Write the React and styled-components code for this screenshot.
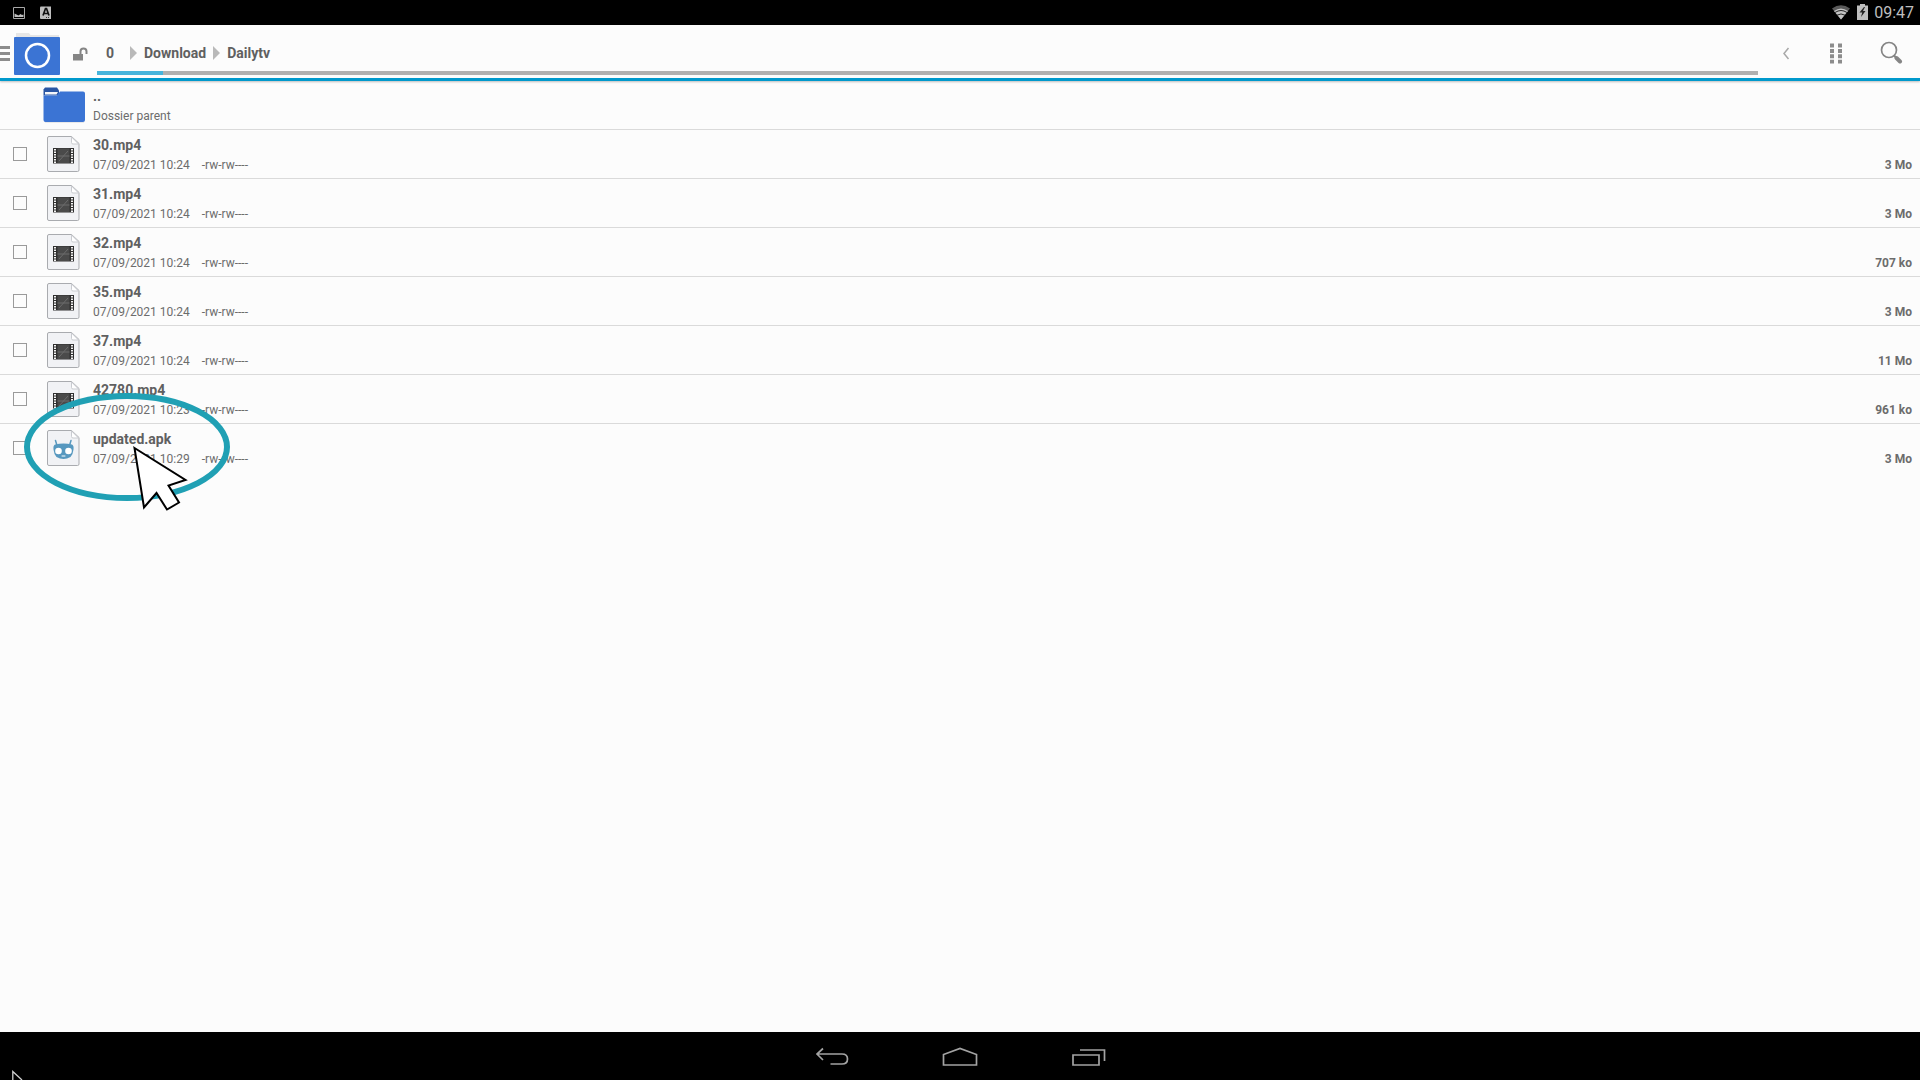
import React from "react";
import styled, { createGlobalStyle } from "styled-components";

const GlobalStyle = createGlobalStyle`
  * { box-sizing: border-box; }
  body {
    margin: 0;
    background: #fcfcfc;
    color: #606060;
    font-family: Roboto, "Liberation Sans", sans-serif;
  }
  ul { list-style: none; margin: 0; padding: 0; }
  svg { display: block; flex: none; }
`;

const Screen = styled.div`
  position: relative;
  display: flex;
  flex-direction: column;
  min-height: 100vh;
  overflow: hidden;
`;

const StatusBar = styled.div`
  display: flex;
  align-items: center;
  justify-content: space-between;
  height: 25px;
  padding: 0 6px 0 12px;
  background: #000;
  color: #bebebe;
`;

const StatusGroup = styled.div`
  display: flex;
  align-items: center;
  gap: ${(p) => p.$gap};
`;

const Clock = styled.time`
  font-size: 16px;
  line-height: 24px;
`;

const Toolbar = styled.header`
  display: flex;
  height: 56px;
  border-bottom: 3px solid #0099cc;
  box-shadow: 0 1px 2px rgba(0, 0, 0, 0.25);
`;

const IconButton = styled.button`
  display: flex;
  align-items: center;
  justify-content: center;
  width: ${(p) => p.$width};
  padding: 0;
  border: 0;
  background: none;
  cursor: pointer;
`;

const MenuButton = styled(IconButton)`
  justify-content: flex-start;
`;

const SearchButton = styled(IconButton)`
  padding-left: 4px;
`;

const PathArea = styled.div`
  display: flex;
  flex: 1;
  flex-direction: column;
  min-width: 0;
`;

const Breadcrumbs = styled.nav`
  display: flex;
  flex: 1;
  align-items: center;
  gap: 7px;
  padding: 10px 0 0 9px;
`;

const Crumb = styled.a`
  min-width: 17px;
  color: #606060;
  font-size: 14px;
  font-weight: 700;
  line-height: 20px;
  text-decoration: none;
`;

const Progress = styled.div`
  height: 4px;
  margin-bottom: 3px;
  background: #b0b0b0;
`;

const ProgressFill = styled.div`
  width: 4%;
  height: 4px;
  background: #46b4dc;
`;

const Actions = styled.div`
  display: flex;
`;

const FileList = styled.ul`
  flex: 1;
`;

const Row = styled.li`
  display: grid;
  grid-template-columns: 42px 44px 1fr auto;
  align-items: center;
  height: 49px;
  padding-right: 8px;
  border-bottom: 1px solid ${(p) => (p.$last ? "transparent" : "#dadada")};
`;

const Checkbox = styled.input`
  appearance: none;
  width: 14px;
  height: 14px;
  margin: 0 0 0 13px;
  border: 1px solid #9a9a9a;
  background: #fcfcfc;
`;

const Info = styled.label`
  display: flex;
  flex-direction: column;
  padding: 2px 0 0 7px;
`;

const Title = styled.span`
  font-size: 14px;
  font-weight: 700;
  line-height: 20px;
`;

const Details = styled.span`
  display: flex;
  gap: 12px;
  color: #6c6c6c;
  font-size: 12px;
  line-height: 20px;
`;

const Size = styled.span`
  align-self: end;
  padding-bottom: 3px;
  color: #6c6c6c;
  font-size: 12px;
  font-weight: 700;
  line-height: 20px;
`;

const SystemNav = styled.nav`
  display: flex;
  justify-content: center;
  height: 48px;
  padding-top: 2px;
  background: #000;
`;

const Highlight = styled.svg`
  position: absolute;
  top: 392px;
  left: 22px;
  pointer-events: none;
`;

const CornerPointer = styled.svg`
  position: absolute;
  bottom: 0;
  left: 12px;
  pointer-events: none;
`;

const files = [
  { name: "30.mp4", date: "07/09/2021 10:24", size: "3 Mo" },
  { name: "31.mp4", date: "07/09/2021 10:24", size: "3 Mo" },
  { name: "32.mp4", date: "07/09/2021 10:24", size: "707 ko" },
  { name: "35.mp4", date: "07/09/2021 10:24", size: "3 Mo" },
  { name: "37.mp4", date: "07/09/2021 10:24", size: "11 Mo" },
  { name: "42780.mp4", date: "07/09/2021 10:23", size: "961 ko" },
  { name: "updated.apk", date: "07/09/2021 10:29", size: "3 Mo" },
];

function FolderIcon() {
  return (
    <svg width="44" height="38" viewBox="0 0 44 38" aria-hidden="true">
      <path d="M3 1.500h12l2 3v5H1.500v-6z" fill="#2a56a4" />
      <path d="M3 6h13l-1.500 2.500H3z" fill="#f4f6fa" />
      <path d="M1.500 9.500H15l3-4h23a2 2 0 0 1 2 2V34a2 2 0 0 1-2 2H3.500a2 2 0 0 1-2-2z" fill="#3b74d4" />
      <path d="M3 36.500h39" stroke="#e9e9e9" />
    </svg>
  );
}

function PageShape({ children }) {
  return (
    <svg width="44" height="38" viewBox="0 0 44 38" aria-hidden="true">
      <path d="M7 1.500h22.500l7.500 7V35a1.500 1.500 0 0 1-1.500 1.500H7A1.500 1.500 0 0 1 5.500 35V3A1.500 1.500 0 0 1 7 1.500z" fill="#f1f2f5" stroke="#a9abaf" />
      <path d="M29.500 2v5.500a1.500 1.500 0 0 0 1.500 1.500h5.500z" fill="#fff" stroke="#c9cbd0" />
      {children}
    </svg>
  );
}

function VideoIcon() {
  return (
    <PageShape>
      <path d="M11 13h21v15.500H11z" fill="#303030" />
      <path d="M15.500 13.500h12v14.500h-12z" fill="#4a4a4a" />
      <path d="M15.500 21h12M17 26l9-10" stroke="#6c6c6c" />
      <path d="M13 14v14M30 14v14" stroke="#f3f3f3" strokeWidth="2" strokeDasharray="1.500 1" />
    </PageShape>
  );
}

function ApkIcon() {
  return (
    <PageShape>
      <path d="M13.500 11.500l1.500 5M29 11.500l-1.500 5" stroke="#5798bf" strokeWidth="1.500" strokeLinecap="round" />
      <path d="M13 15.500q8.500-2 17 0 2 1 1.500 5-.5 5-3 7.500-7 4-14 0-2.500-2.500-3-7.500-.5-4 1.500-5z" fill="#5798bf" />
      <circle cx="16.500" cy="22" r="3.300" fill="#fff" />
      <circle cx="26.500" cy="22" r="3.300" fill="#fff" />
      <path d="M20 27h3" stroke="#fff" strokeLinecap="round" />
    </PageShape>
  );
}

function CrumbArrow() {
  return (
    <svg width="7" height="14" viewBox="0 0 7 14" aria-hidden="true">
      <path d="M0 0l7 7-7 7z" fill="#b9b9b9" />
    </svg>
  );
}

function FileRow({ file, last }) {
  return (
    <Row $last={last}>
      <Checkbox type="checkbox" id={file.name} />
      {file.name.endsWith(".apk") ? <ApkIcon /> : <VideoIcon />}
      <Info htmlFor={file.name}>
        <Title>{file.name}</Title>
        <Details>
          <span>{file.date}</span>
          <span>-rw-rw----</span>
        </Details>
      </Info>
      <Size>{file.size}</Size>
    </Row>
  );
}

export default function App() {
  return (
    <Screen>
      <GlobalStyle />
      <StatusBar>
        <StatusGroup $gap="14px">
          <svg width="14" height="14" viewBox="0 0 14 14" aria-hidden="true">
            <path d="M1.500 1.500h11v11h-11z" fill="none" stroke="#a8a8a8" />
            <path d="M2.500 11V7.500l2 1 2 1 2-1.500 1.500 1 1.500-.5V11z" fill="#bdbdbd" />
          </svg>
          <svg width="12" height="14" viewBox="0 0 12 14" aria-hidden="true">
            <path d="M1 .5h10v12.500H1q-1 0-1-1V1.500q0-1 1-1z" fill="#bebebe" />
            <path d="M3 9.500l2.500-7h1l2.500 7M4 7.500h4" fill="none" stroke="#111" strokeWidth="1.700" />
            <path d="M6 11.500h4" stroke="#333" strokeDasharray="1 1" />
          </svg>
        </StatusGroup>
        <StatusGroup $gap="6px">
          <svg width="20" height="16" viewBox="0 0 20 16" aria-hidden="true">
            <path d="M1 3.500q9-6.500 18 0l-9 11z" fill="#5a5a5a" />
            <path d="M3 6q7-5 14 0l-7 8.500z" fill="#c4c4c4" />
            <path d="M4 7.500q6-4 12 0M6 10.200q4-2.500 8 0" fill="none" stroke="#222" />
          </svg>
          <svg width="11" height="18" viewBox="0 0 11 18" aria-hidden="true">
            <path d="M3 0h5v1.500h3V16H0V1.500h3z" fill="#bebebe" />
            <path d="M7 3L2.500 8.500h2.700L4 13 8.500 7H6l2-4z" fill="#222" />
          </svg>
          <Clock>09:47</Clock>
        </StatusGroup>
      </StatusBar>

      <Toolbar>
        <MenuButton type="button" $width="64px" aria-label="Menu">
          <svg width="61" height="53" viewBox="0 0 61 53" aria-hidden="true">
            <path d="M0 22.500h10M0 28.500h10M0 34.500h10" stroke="#8c8c8c" strokeWidth="3" />
            <path d="M16 12V8h13l1.500 2H59v2z" fill="#e6e6e6" />
            <rect x="14" y="12" width="46" height="38" rx="1" fill="#3b74d4" />
            <circle cx="37.500" cy="30.500" r="11.500" fill="none" stroke="#fff" strokeWidth="2.500" />
          </svg>
        </MenuButton>
        <IconButton type="button" $width="33px" aria-label="Verrou">
          <svg width="15" height="53" viewBox="0 0 15 53" aria-hidden="true">
            <path d="M0 29h10v6.500H0z" fill="#858585" />
            <path d="M7.500 29v-2.500a3 3 0 0 1 6 0V29" fill="none" stroke="#858585" strokeWidth="2" />
          </svg>
        </IconButton>
        <PathArea>
          <Breadcrumbs>
            <Crumb href="#0">0</Crumb>
            <CrumbArrow />
            <Crumb href="#download">Download</Crumb>
            <CrumbArrow />
            <Crumb href="#dailytv">Dailytv</Crumb>
          </Breadcrumbs>
          <Progress>
            <ProgressFill />
          </Progress>
        </PathArea>
        <Actions>
          <IconButton type="button" $width="56px" aria-label="Retour">
            <svg width="8" height="16" viewBox="0 0 8 16" fill="none" aria-hidden="true">
              <path d="M6.500 4L2 9.500 6.500 15" stroke="#a8a8a8" strokeWidth="1.500" />
            </svg>
          </IconButton>
          <IconButton type="button" $width="44px" aria-label="Affichage">
            <svg width="12" height="24" viewBox="0 0 12 24" aria-hidden="true">
              <path d="M2 3.500v20M10 3.500v20" stroke="#8c8c8c" strokeWidth="4" strokeDasharray="4 1.400" />
            </svg>
          </IconButton>
          <SearchButton type="button" $width="62px" aria-label="Rechercher">
            <svg width="24" height="24" viewBox="0 0 24 24" fill="none" aria-hidden="true">
              <circle cx="10" cy="10" r="7.500" stroke="#858585" strokeWidth="1.700" />
              <path d="M15 15.500l2 2" stroke="#858585" strokeWidth="2" />
              <path d="M17.500 18l3.500 3.500" stroke="#858585" strokeWidth="4" strokeLinecap="round" />
            </svg>
          </SearchButton>
        </Actions>
      </Toolbar>

      <FileList>
        <Row>
          <span />
          <FolderIcon />
          <Info as="div">
            <Title>..</Title>
            <Details>Dossier parent</Details>
          </Info>
        </Row>
        {files.map((file, i) => (
          <FileRow key={file.name} file={file} last={i === files.length - 1} />
        ))}
      </FileList>

      <SystemNav>
        <IconButton type="button" $width="128px" aria-label="Précédent">
          <svg width="34" height="20" viewBox="0 0 34 20" fill="none" stroke="#a3a3a3" strokeWidth="1.700" aria-hidden="true">
            <path d="M8 1.500L2 7l6 6M2.500 7H27q5.500 0 5.500 5t-5.500 5H15.500" />
          </svg>
        </IconButton>
        <IconButton type="button" $width="128px" aria-label="Accueil">
          <svg width="36" height="20" viewBox="0 0 36 20" fill="none" stroke="#a3a3a3" strokeWidth="1.700" aria-hidden="true">
            <path d="M1.500 18V7.500L18 1.500l16.500 6V18z" />
          </svg>
        </IconButton>
        <IconButton type="button" $width="128px" aria-label="Applications récentes">
          <svg width="36" height="20" viewBox="0 0 36 20" fill="none" stroke="#a3a3a3" strokeWidth="1.700" aria-hidden="true">
            <path d="M3 8h26v10H3zM10 3h24.500v11" />
          </svg>
        </IconButton>
      </SystemNav>

      <Highlight width="212" height="122" viewBox="0 0 212 122" aria-hidden="true">
        <ellipse cx="105" cy="55" rx="100" ry="51" fill="none" stroke="#20a0b4" strokeWidth="6" />
        <path d="M112.500 56l51 32-17 5.500 10.500 17-12 7-10.500-16.500-12.500 14.500z" fill="#fff" stroke="#000" strokeWidth="2" />
      </Highlight>
      <CornerPointer width="12" height="10" viewBox="0 0 12 10" aria-hidden="true">
        <path d="M.8 10V1.500L10 10" fill="#000" stroke="#d0d0d0" strokeWidth="1.300" />
      </CornerPointer>
    </Screen>
  );
}
